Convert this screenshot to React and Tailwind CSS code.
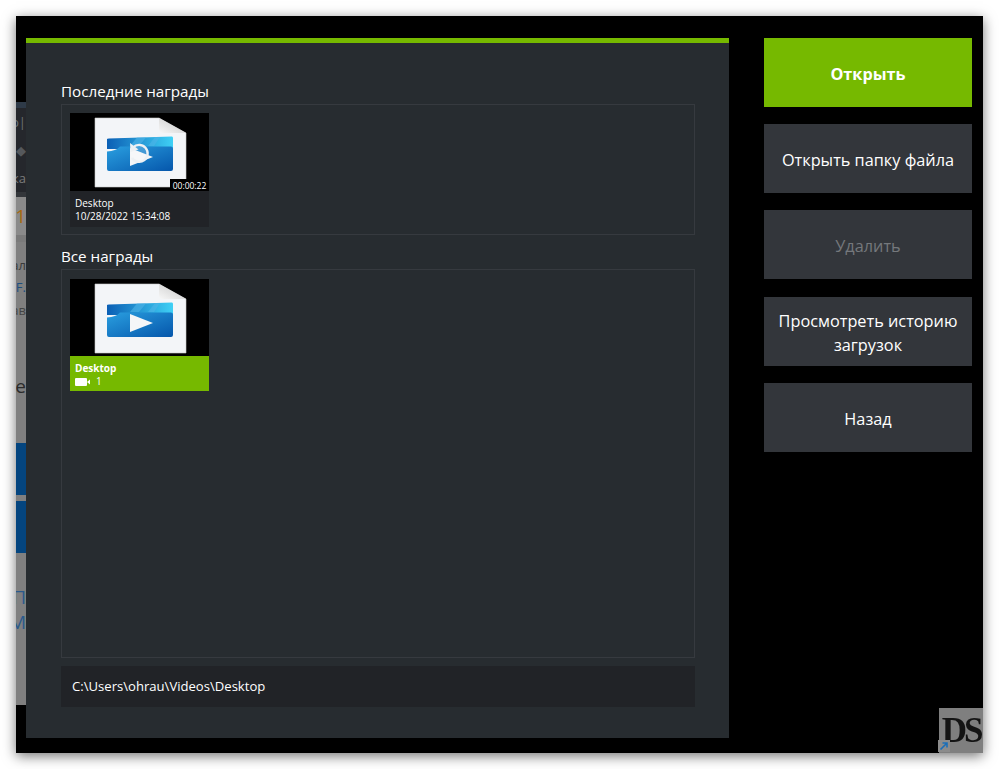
import React from 'react'

const font = { fontFamily: '"Open Sans", "Noto Sans", sans-serif' }

function VideoThumb({ replay, gid, h }) {
  return (
    <svg width="139" height={h} viewBox={`0 0 139 ${h}`} className="block">
      <defs>
        <linearGradient id={gid} x1="0" y1="0" x2="1" y2="1">
          <stop offset="0" stopColor="#2a9fe0" />
          <stop offset="1" stopColor="#0556ab" />
        </linearGradient>
        <linearGradient id={gid + 't'} x1="0" y1="0" x2="1" y2="0">
          <stop offset="0" stopColor="#0b5fb5" />
          <stop offset="1" stopColor="#3fd0f5" />
        </linearGradient>
        <linearGradient id={gid + 'f'} x1="0" y1="1" x2="1" y2="0">
          <stop offset="0" stopColor="#f7f7f7" />
          <stop offset="1" stopColor="#c4c4c4" />
        </linearGradient>
      </defs>
      <rect width="139" height={h} fill="#000" />
      <path d="M25 5H89L116 20V74H25Z" fill="#f3f5f8" stroke="#c9c9c9" strokeWidth="0.6" />
      <path d="M89 5L116 20H93Q89 20 89 16Z" fill={`url(#${gid}f)`} />
      <path d="M37 26Q37 25.500 39 25.500L102 23.500Q103 23.500 103 25V36H37Z" fill={`url(#${gid}t)`} />
      <path d="M60 33L67 24.500H76L69 33ZM78 33L85 24H90L84 33Z" fill="#4fb4e8" opacity="0.6" />
      <path d="M37 38.500Q46 38 50 33.400H101Q103 33.400 103 35.500V56Q103 58 101 58H39Q37 58 37 56Z" fill={`url(#${gid})`} />
      <path d="M60 35V53L83 44Z" fill="#f4f6f8" />
      {replay && (
        <g>
          <circle cx="69" cy="40" r="8.500" fill="#ffffff" fillOpacity="0.18" />
          <path d="M63 34.500A8.500 8.500 0 1 1 62 45" fill="none" stroke="#eef1f4" strokeWidth="2.400" />
          <path d="M60 30L60.500 39L68.500 36.500Z" fill="#eef1f4" />
        </g>
      )}
    </svg>
  )
}

function Button({ label, variant }) {
  const tone = variant === 'green'
    ? 'bg-[#76b900] font-bold text-white'
    : variant === 'off'
      ? 'bg-[#33363b] text-[#75787c]'
      : 'bg-[#33363b] text-white'
  return (
    <div className={`flex h-[69px] w-[208px] items-center justify-center px-2 pt-[2px] text-center text-[16.300px] leading-[24px] ${tone}`}>
      {label}
    </div>
  )
}

const stripRows = [
  { h: 86, bg: 'bg-black' },
  { h: 6, bg: 'bg-[#2e3a48]' },
  { h: 29, bg: 'bg-[#25272c]', text: 'mp|', color: 'text-[#6d7278]' },
  { h: 28, bg: 'bg-[#25272c]', text: '◆', color: 'text-[#55585c]', center: true },
  { h: 27, bg: 'bg-[#25272c]', text: 'ка', color: 'text-[#7b7b7b]' },
  { h: 5, bg: 'bg-[#33363a]' },
  { h: 38, bg: 'bg-[#8a8a8a]', text: '11', color: 'text-[#a8680f]', big: true },
  { h: 7, bg: 'bg-[#7a7a7a]' },
  { h: 12, bg: 'bg-[#808080]' },
  { h: 24, bg: 'bg-[#808080]', text: 'ал', color: 'text-[#3a3a3a]' },
  { h: 20, bg: 'bg-[#808080]', text: 'sF.', color: 'text-[#1d4f80]' },
  { h: 26, bg: 'bg-[#808080]', text: 'ав', color: 'text-[#454545]' },
  { h: 48, bg: 'bg-[#808080]' },
  { h: 28, bg: 'bg-[#808080]', text: 'Пе', color: 'text-[#2b2b2b]', big: true },
  { h: 43, bg: 'bg-[#808080]' },
  { h: 52, bg: 'bg-[#04457f]' },
  { h: 6, bg: 'bg-[#808080]' },
  { h: 52, bg: 'bg-[#04457f]' },
  { h: 32, bg: 'bg-[#808080]' },
  { h: 25, bg: 'bg-[#808080]', text: 'П', color: 'text-[#2b5a8c]', big: true },
  { h: 25, bg: 'bg-[#808080]', text: 'М', color: 'text-[#2b5a8c]', big: true },
  { h: 70, bg: 'bg-[#808080]' },
  { h: 48, bg: 'bg-black' },
]

export default function App() {
  return (
    <div className="h-[769px] w-[999px] overflow-hidden bg-white p-4" style={font}>
      <div className="relative flex h-[737px] w-[967px] bg-black shadow-[0_3px_12px_rgba(0,0,0,0.55)]">
        <div className="flex w-[10px] flex-col overflow-hidden">
          {stripRows.map((r, i) => (
            <div
              key={i}
              style={{ height: r.h }}
              className={`flex shrink-0 items-center overflow-hidden whitespace-nowrap ${r.center ? 'justify-center' : 'justify-end'} ${r.bg} ${r.color || ''} ${r.big ? 'text-[19px]' : 'text-[13px]'}`}
            >
              {r.text}
            </div>
          ))}
        </div>

        <div className="mt-[22px] flex h-[700px] w-[703px] flex-col border-t-[5px] border-[#76b900] bg-[#272c30] pt-[38px] pr-[34px] pb-[31px] pl-[35px]">
          <div className="h-[23px] text-[15.200px] leading-[20px] text-white">Последние награды</div>
          <div className="h-[131px] border border-[#363a3f] pt-2 pl-2">
            <div className="w-[139px] text-[10px] leading-[13px] text-white">
              <div className="relative">
                <VideoThumb replay gid="a" h={78} />
                <div className="absolute right-0 bottom-0 h-[12px] w-[39px] bg-black pt-px text-center text-[8.500px] leading-[11px]">00:00:22</div>
              </div>
              <div className="h-[36px] bg-[#212327] pt-[6px] pl-[5px]">
                <div>Desktop</div>
                <div>10/28/2022 15:34:08</div>
              </div>
            </div>
          </div>

          <div className="h-[34px] pt-[11px] text-[15.200px] leading-[20px] text-white">Все награды</div>
          <div className="min-h-0 flex-1 border border-[#363a3f] pt-[9px] pl-2">
            <div className="w-[139px] text-[10px] leading-[13px] text-white">
              <VideoThumb gid="b" h={77} />
              <div className="h-[35px] bg-[#76b900] pt-[6px] pl-[5px]">
                <div className="font-bold">Desktop</div>
                <div className="flex items-center gap-[6px]">
                  <svg width="15" height="8" viewBox="0 0 15 8">
                    <rect width="12" height="8" rx="1" fill="#fff" />
                    <path d="M12 4L15 1.500V6.500Z" fill="#fff" />
                  </svg>
                  <span>1</span>
                </div>
              </div>
            </div>
          </div>

          <div className="mt-2 flex h-[41px] shrink-0 items-center bg-[#212327] pt-px pl-[11px] text-[13.100px] text-white">
            C:\Users\ohrau\Videos\Desktop
          </div>
        </div>

        <div className="mt-[22px] ml-[35px] flex flex-col">
          <Button label="Открыть" variant="green" />
          <div className="mt-[17px]"><Button label="Открыть папку файла" /></div>
          <div className="mt-[17px]"><Button label="Удалить" variant="off" /></div>
          <div className="mt-[18px]"><Button label="Просмотреть историю загрузок" /></div>
          <div className="mt-[17px]"><Button label="Назад" /></div>
        </div>

        <div className="absolute right-0 bottom-0 flex h-[45px] w-[44px] items-center justify-center overflow-hidden bg-[#7f7f7f] text-[35px] leading-none font-bold tracking-[-3px] text-[#141414] blur-[0.4px] [font-family:'Liberation_Serif',serif]">
          DS
        </div>
        <div className="absolute right-[33px] bottom-px flex h-[12px] w-[12px] items-center justify-center bg-[#8c8c8c]">
          <svg width="10" height="10" viewBox="0 0 10 10" fill="none" stroke="#1c6fb8" strokeWidth="1.600">
            <path d="M1.500 8.500L8 2M3.500 2H8V6.500" />
          </svg>
        </div>
      </div>
    </div>
  )
}
